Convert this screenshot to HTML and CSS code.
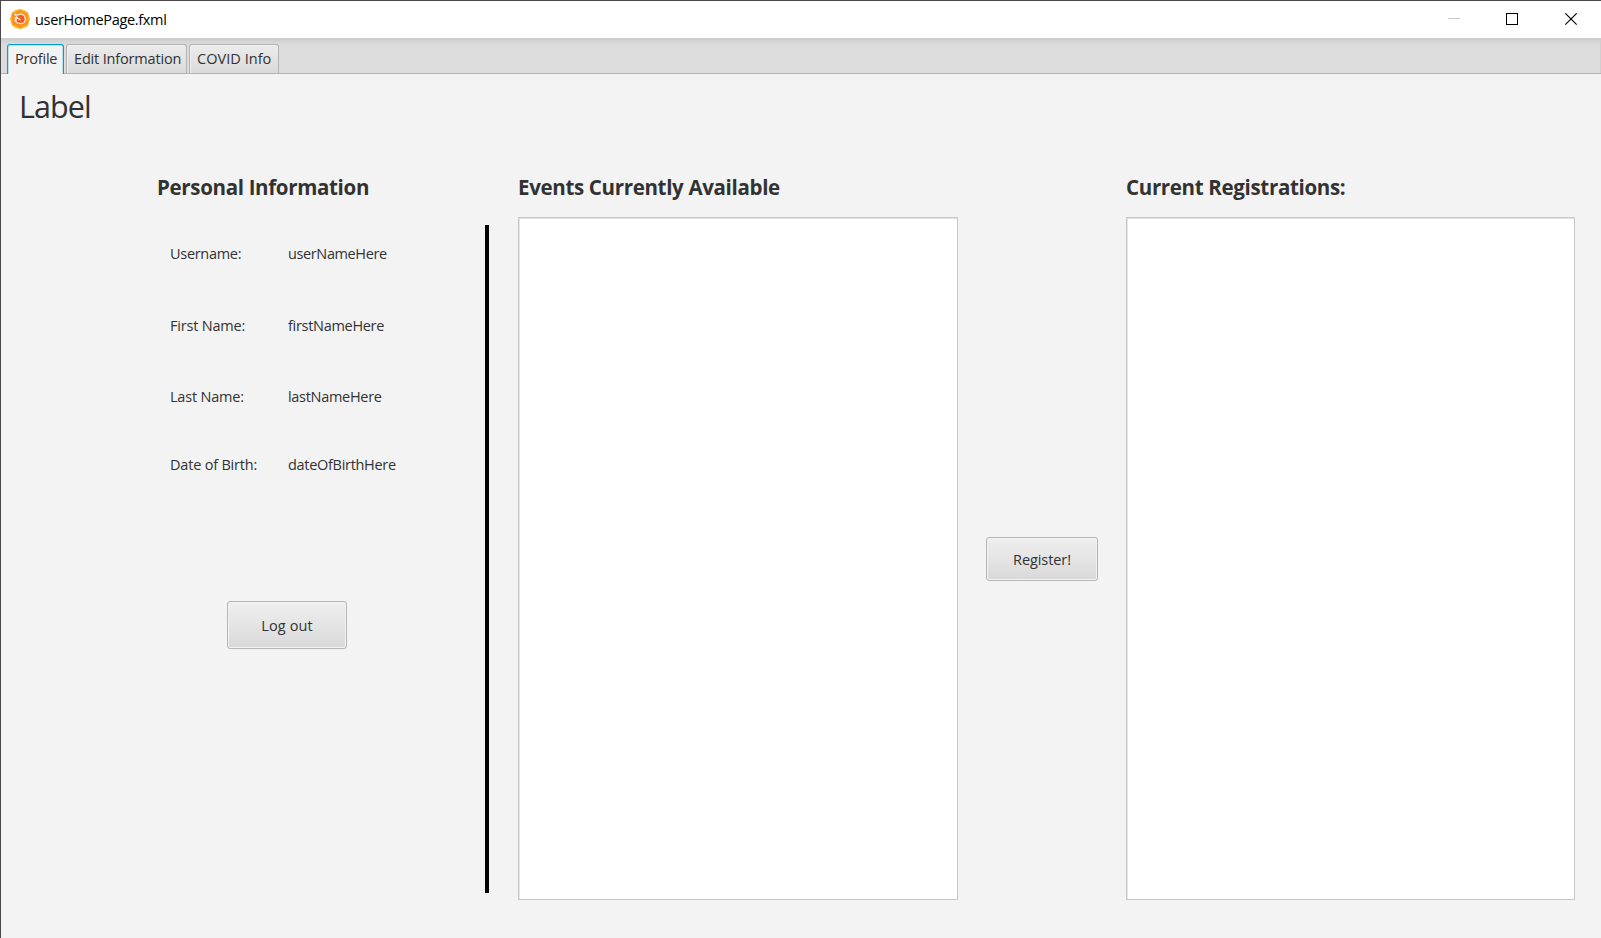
FILE: index.html
```
<!DOCTYPE html>
<html lang="en">
<head>
<meta charset="utf-8">
<title>userHomePage.fxml</title>
<link rel="stylesheet" href="styles.css">
</head>
<body>
<div class="window">
  <header class="titlebar">
    <svg class="app-icon" width="20" height="20" viewBox="0 0 20 20">
      <path fill="#f9b021" d="M10 0l4 1 3.800 2.200L19 7l1 3-1 3-1.200 4L14 19l-4 1-4-1-3.800-2.200L1 13l-1-3 1-3 1.200-3.800L6 1z"/>
      <path fill="#fa8f20" d="M10 1l3.500 2.500L18 5l-.5 5 .5 5-4.500 1.500L10 19l-3.500-2.500L2 15l.5-5L2 5l4.500-1.500z"/>
      <circle cx="10.500" cy="10.500" r="4.500" fill="#f65a22"/>
      <path fill="none" stroke="#fff0dc" stroke-width="1.200" stroke-linejoin="round" d="M4.500 5l3.500 1 3-1.200 3.500 2 1 3.700-1.500 3.200-3 1-3.500-.7-2.500-2.500 1.500-.5-1.500-2 3 .5L4.500 5M8.500 9.500l2 1.500"/>
    </svg>
    <h1 class="title">userHomePage.fxml</h1>
    <svg class="controls" width="130" height="14" viewBox="0 0 130 14" fill="none" shape-rendering="crispEdges">
      <path stroke="#c8c8c8" d="M0 5.500h12"/>
      <rect x="58.500" y=".5" width="11" height="11" stroke="#000"/>
      <path stroke="#000" shape-rendering="auto" stroke-width="1.100" d="M117.300.3l11.400 11.400M128.700.3l-11.400 11.400"/>
    </svg>
  </header>
  <nav class="tabs">
    <div class="tab tab-profile active">Profile</div>
    <div class="tab tab-edit">Edit Information</div>
    <div class="tab tab-covid">COVID Info</div>
  </nav>
  <main class="page">
    <h2 class="page-label">Label</h2>
    <div class="columns">
      <section class="personal">
        <h3>Personal Information</h3>
        <dl class="fields">
          <dt class="tight">Username:</dt><dd class="tighter">userNameHere</dd>
          <dt>First Name:</dt><dd class="tight">firstNameHere</dd>
          <dt>Last Name:</dt><dd class="tight">lastNameHere</dd>
          <dt>Date of Birth:</dt><dd class="tight">dateOfBirthHere</dd>
        </dl>
        <button class="button logout">Log out</button>
      </section>
      <div class="divider"></div>
      <section class="events">
        <h3>Events Currently Available</h3>
        <div class="list"></div>
      </section>
      <button class="button register">Register!</button>
      <section class="registrations">
        <h3>Current Registrations:</h3>
        <div class="list"></div>
      </section>
    </div>
  </main>
</div>
</body>
</html>
```
FILE: styles.css
```
* { box-sizing: border-box; margin: 0; padding: 0; }
body {
  width: 1601px;
  height: 938px;
  overflow: hidden;
  background: #f3f3f3;
  color: #323232;
  font: 14.500px/20px "Open Sans", "Noto Sans", sans-serif;
  white-space: nowrap;
}
.window {
  display: flex;
  flex-direction: column;
  height: 938px;
  border-top: 1px solid #4b474a;
  border-left: 1px solid #4b474a;
}
.titlebar {
  display: flex;
  align-items: flex-start;
  height: 37px;
  padding: 8px 23px 0 9px;
  background: #fff;
  color: #000;
}
.title { margin: 1px auto 0 5px; font-size: 14.500px; font-weight: 400; letter-spacing: -.32px; }
.controls { margin-top: 4px; }
.tabs {
  display: flex;
  align-items: flex-end;
  gap: 2px;
  height: 36px;
  padding-left: 6px;
  background: linear-gradient(#cbcbcb, #dcdcdc 7px);
  border-bottom: 1px solid #b2b2b2;
  box-shadow: inset -1px 0 #cfcfcf;
}
.tab {
  height: 29px;
  padding: 4px 0 0 7px;
  border: 1px solid #b2b2b2;
  border-bottom: 0;
  border-radius: 3px 3px 0 0;
  background: linear-gradient(#ececec, #dadada);
  box-shadow: inset 1px 1px #f1f1f1;
}
.tab-profile { width: 57px; letter-spacing: -.2px; }
.tab-edit { width: 121px; letter-spacing: -.17px; }
.tab-covid { width: 90px; letter-spacing: .04px; }
.tab.active {
  height: 30px;
  margin-bottom: -1px;
  border-color: #039ed3;
  background: #f3f3f3;
  box-shadow: inset 1px 1px #b8e1ee, inset -1px 0 #b8e1ee;
}
.page { flex: 1; padding: 11px 0 0 18px; }
.page-label { height: 85px; font-size: 30.500px; line-height: 42px; font-weight: 400; letter-spacing: -.9px; }
.columns { display: flex; }
h3 { height: 47px; font-size: 20.500px; line-height: 34px; font-weight: 700; letter-spacing: -.33px; }
.personal { width: 466px; padding-left: 138px; }
.fields {
  display: grid;
  grid-template-columns: 118px 1fr;
  grid-template-rows: 72px 71px 68px 20px;
  padding: 27px 0 0 13px;
  letter-spacing: -.2px;
}
.fields .tight { letter-spacing: -.3px; }
.fields .tighter { letter-spacing: -.38px; }
.button {
  padding-top: 2px;
  border: 1px solid #b5b5b5;
  border-radius: 3px;
  background: linear-gradient(#efefef, #d9d9d9);
  box-shadow: inset 0 0 0 1px #f2f2f2;
  font: inherit;
  color: inherit;
}
.logout { display: block; width: 120px; height: 48px; margin: 126px 0 0 70px; letter-spacing: .12px; }
.divider { width: 4px; height: 668px; margin: 55px 29px 0 0; background: #000; }
.list { height: 683px; border: 1px solid #c8c8c8; background: #fff; box-shadow: inset 1px 1px #e4e4e4; }
.events { width: 440px; }
.register { width: 112px; height: 44px; margin: 367px 28px 0; letter-spacing: -.08px; }
.registrations { width: 449px; }
```
